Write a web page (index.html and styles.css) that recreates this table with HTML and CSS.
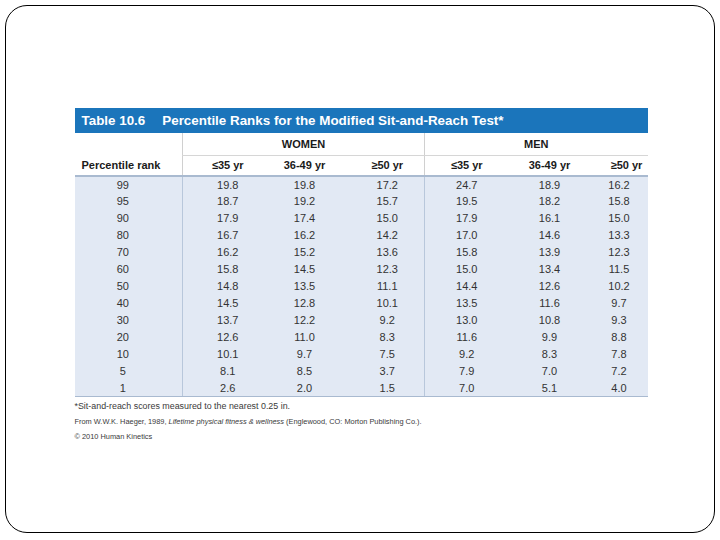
FILE: index.html
```html
<!DOCTYPE html>
<html>
<head>
<meta charset="utf-8">
<link rel="stylesheet" href="styles.css">
</head>
<body>
<div class="slide">
  <div class="figure">
    <div class="title-bar">
      <span class="t-num">Table 10.6</span>
      <span class="t-text">Percentile Ranks for the Modified Sit-and-Reach Test*</span>
    </div>
    <table class="data">
      <colgroup>
        <col class="c-rank"><col class="c-w1"><col class="c-w2"><col class="c-w3"><col class="c-m1"><col class="c-m2"><col class="c-m3">
      </colgroup>
      <thead>
        <tr class="group">
          <th class="blank"></th>
          <th colspan="3" class="grp sep">WOMEN</th>
          <th colspan="3" class="grp sep">MEN</th>
        </tr>
        <tr class="sub">
          <th class="rank-h">Percentile rank</th>
          <th class="sep">≤35 yr</th>
          <th>36-49 yr</th>
          <th class="p3">≥50 yr</th>
          <th class="sep">≤35 yr</th>
          <th>36-49 yr</th>
          <th class="pm3">≥50 yr</th>
        </tr>
      </thead>
      <tbody>
        <tr><td class="rank">99</td><td class="sep">19.8</td><td>19.8</td><td class="p3">17.2</td><td class="sep">24.7</td><td>18.9</td><td>16.2</td></tr>
        <tr><td class="rank">95</td><td class="sep">18.7</td><td>19.2</td><td class="p3">15.7</td><td class="sep">19.5</td><td>18.2</td><td>15.8</td></tr>
        <tr><td class="rank">90</td><td class="sep">17.9</td><td>17.4</td><td class="p3">15.0</td><td class="sep">17.9</td><td>16.1</td><td>15.0</td></tr>
        <tr><td class="rank">80</td><td class="sep">16.7</td><td>16.2</td><td class="p3">14.2</td><td class="sep">17.0</td><td>14.6</td><td>13.3</td></tr>
        <tr><td class="rank">70</td><td class="sep">16.2</td><td>15.2</td><td class="p3">13.6</td><td class="sep">15.8</td><td>13.9</td><td>12.3</td></tr>
        <tr><td class="rank">60</td><td class="sep">15.8</td><td>14.5</td><td class="p3">12.3</td><td class="sep">15.0</td><td>13.4</td><td>11.5</td></tr>
        <tr><td class="rank">50</td><td class="sep">14.8</td><td>13.5</td><td class="p3">11.1</td><td class="sep">14.4</td><td>12.6</td><td>10.2</td></tr>
        <tr><td class="rank">40</td><td class="sep">14.5</td><td>12.8</td><td class="p3">10.1</td><td class="sep">13.5</td><td>11.6</td><td>9.7</td></tr>
        <tr><td class="rank">30</td><td class="sep">13.7</td><td>12.2</td><td class="p3">9.2</td><td class="sep">13.0</td><td>10.8</td><td>9.3</td></tr>
        <tr><td class="rank">20</td><td class="sep">12.6</td><td>11.0</td><td class="p3">8.3</td><td class="sep">11.6</td><td>9.9</td><td>8.8</td></tr>
        <tr><td class="rank">10</td><td class="sep">10.1</td><td>9.7</td><td class="p3">7.5</td><td class="sep">9.2</td><td>8.3</td><td>7.8</td></tr>
        <tr><td class="rank">5</td><td class="sep">8.1</td><td>8.5</td><td class="p3">3.7</td><td class="sep">7.9</td><td>7.0</td><td>7.2</td></tr>
        <tr><td class="rank">1</td><td class="sep">2.6</td><td>2.0</td><td class="p3">1.5</td><td class="sep">7.0</td><td>5.1</td><td>4.0</td></tr>
      </tbody>
    </table>
    <div class="notes">
      <p class="note">*Sit-and-reach scores measured to the nearest 0.25 in.</p>
      <p class="src">From W.W.K. Haeger, 1989, <em>Lifetime physical fitness &amp; wellness</em> (Englewood, CO: Morton Publishing Co.).</p>
      <p class="src">© 2010 Human Kinetics</p>
    </div>
  </div>
</div>
</body>
</html>
```
FILE: styles.css
```css
html, body {
  margin: 0;
  padding: 0;
  background: #fff;
}
body {
  font-family: "Liberation Sans", Arial, sans-serif;
}
.slide {
  box-sizing: border-box;
  margin: 5px 0 0 5px;
  width: 710px;
  height: 528px;
  border: 1.5px solid #000;
  border-radius: 22px;
  padding: 101.5px 0 0 68.5px;
}
.figure {
  width: 573px;
}
.title-bar {
  height: 25px;
  background: #1b75bb;
  color: #fff;
  font-weight: bold;
  font-size: 13.4px;
  display: flex;
  align-items: center;
  gap: 17px;
  padding-left: 7px;
  box-sizing: border-box;
}
.data {
  width: 573px;
  table-layout: fixed;
  border-collapse: collapse;
  font-size: 11px;
}
.c-rank { width: 108px; }
.c-w1 { width: 90px; }
.c-w2 { width: 64px; }
.c-w3 { width: 88px; }
.c-m1 { width: 84px; }
.c-m2 { width: 82px; }
.c-m3 { width: 57px; }
.data th, .data td {
  padding: 0;
  text-align: center;
  white-space: nowrap;
}
.data th {
  font-weight: bold;
  color: #1a1a1a;
}
.group th {
  height: 22px;
}
.group .grp {
  border-bottom: 1px solid #d6d6d6;
}
.data thead .sep {
  border-left: 1px solid #d0d0d0;
}
.sub th {
  height: 19px;
  border-bottom: 2px solid #a9bad0;
}
.sub .rank-h {
  text-align: left;
  padding-left: 7px;
}
.data tbody {
  background: #e2e9f4;
}
.data tbody tr {
  height: 17px;
}
.data td {
  color: #333;
}
.data tbody .sep {
  border-left: 1px solid #b8c7db;
}
.data tbody tr:last-child td {
  border-bottom: 1.5px solid #a9bad0;
}
.data .rank {
  padding-right: 11px;
}
.data .p3 {
  padding-left: 14px;
}
.data .pm3 {
  padding-left: 15px;
}
.notes {
  padding-top: 2px;
  color: #3a3a3a;
}
.notes p {
  margin: 0;
}
.note {
  font-size: 8.9px;
  line-height: 15px;
}
.src {
  font-size: 7.4px;
  line-height: 15px;
}
```
